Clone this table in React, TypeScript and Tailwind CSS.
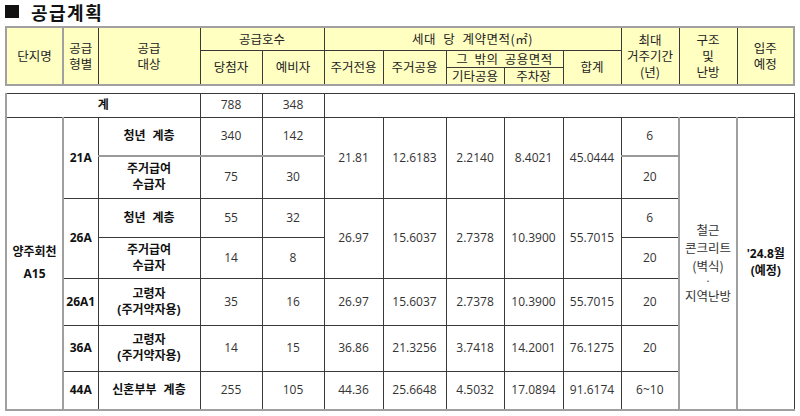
const font = "font-['Open_Sans','Noto_Sans_CJK_KR',sans-serif]"

const h = "border border-[#3a3a3a] text-center align-middle p-0 font-normal leading-[16px]"
const c = "border border-[#3a3a3a] text-center align-middle p-0 leading-[16px]"
const b = c + " font-bold text-[#111]"
const split = " border-b-2 border-b-[#9a9a9a]"
const ws = " [word-spacing:4px]"

function Cols() {
  const w = [57, 35, 102, 62, 62, 59, 63, 58, 59, 58, 58, 58, 57]
  return (
    <colgroup>
      {w.map((x, i) => (
        <col key={i} style={{ width: x }} />
      ))}
    </colgroup>
  )
}

export default function App() {
  return (
    <div className={`w-[800px] h-[416px] bg-white text-[#333] ${font}`}>
      {/* Title */}
      <div className="h-[26px] pl-[5px] flex items-start gap-[12px] text-[#111]">
        <span className="mt-[5px] w-[14px] h-[13px] bg-[#111]" />
        <span className="text-[18px] font-bold leading-[24px] tracking-[1.5px] font-['Noto_Sans_CJK_KR',sans-serif]">공급계획</span>
      </div>

      {/* Header table */}
      <table className="ml-[5px] w-[788px] table-fixed border-collapse bg-[#ffffc2] text-[12.5px] text-[#222] border-2 border-[#a0a0a0] font-['Noto_Sans_CJK_KR',sans-serif]">
        <Cols />
        <thead>
          <tr className="h-[23px]">
            <th rowSpan={3} className={h + " border-r-2 border-r-[#a0a0a0]"}>단지명</th>
            <th rowSpan={3} className={h}>공급<br />형별</th>
            <th rowSpan={3} className={h}>공급<br />대상</th>
            <th colSpan={2} className={h}>공급호수</th>
            <th colSpan={5} className={h + " tracking-[0.5px]" + ws}>세대 당 계약면적(㎡)</th>
            <th rowSpan={3} className={h}>최대<br />거주기간<br />(년)</th>
            <th rowSpan={3} className={h}>구조<br />및<br />난방</th>
            <th rowSpan={3} className={h}>입주<br />예정</th>
          </tr>
          <tr className="h-[17px]">
            <th rowSpan={2} className={h}>당첨자</th>
            <th rowSpan={2} className={h}>예비자</th>
            <th rowSpan={2} className={h}>주거전용</th>
            <th rowSpan={2} className={h}>주거공용</th>
            <th colSpan={2} className={h + " tracking-[0.5px] [word-spacing:3px]"}>그 밖의 공용면적</th>
            <th rowSpan={2} className={h}>합계</th>
          </tr>
          <tr className="h-[14px]">
            <th className={h}>기타공용</th>
            <th className={h}>주차장</th>
          </tr>
        </thead>
      </table>

      {/* Body table */}
      <table className="mt-[7px] ml-[5px] w-[788px] table-fixed border-collapse text-[12px] border-l-2 border-b-2 border-[#a0a0a0]">
        <Cols />
        <tbody>
          <tr className="h-[24px]">
            <td colSpan={3} className={b}>계</td>
            <td className={c}>788</td>
            <td className={c}>348</td>
            <td colSpan={8} className={c}></td>
          </tr>

          <tr className="h-[39px]">
            <td rowSpan={7} className={b + " border-l-2 border-l-[#a0a0a0] border-r-2 border-r-[#a0a0a0] leading-[22px]"}>양주회천<br />A15</td>
            <td rowSpan={2} className={b}>21A</td>
            <td className={b + split + ws}>청년 계층</td>
            <td className={c + split}>340</td>
            <td className={c + split}>142</td>
            <td rowSpan={2} className={c}>21.81</td>
            <td rowSpan={2} className={c}>12.6183</td>
            <td rowSpan={2} className={c}>2.2140</td>
            <td rowSpan={2} className={c}>8.4021</td>
            <td rowSpan={2} className={c}>45.0444</td>
            <td className={c + split}>6</td>
            <td rowSpan={7} className={c + " border-x-2 border-x-[#a0a0a0] text-[12.5px] leading-[18px] font-['Noto_Sans_CJK_KR',sans-serif]"}>
              철근<br />콘크리트<br />(벽식)<br /><span className="text-[10px] leading-[12px] block">·</span>지역난방
            </td>
            <td rowSpan={7} className={b + " leading-[17px] pb-[2px]"}>'24.8월<br />(예정)</td>
          </tr>
          <tr className="h-[42px]">
            <td className={b}>주거급여<br />수급자</td>
            <td className={c}>75</td>
            <td className={c}>30</td>
            <td className={c}>20</td>
          </tr>

          <tr className="h-[39px]">
            <td rowSpan={2} className={b}>26A</td>
            <td className={b + ws}>청년 계층</td>
            <td className={c}>55</td>
            <td className={c}>32</td>
            <td rowSpan={2} className={c}>26.97</td>
            <td rowSpan={2} className={c}>15.6037</td>
            <td rowSpan={2} className={c}>2.7378</td>
            <td rowSpan={2} className={c}>10.3900</td>
            <td rowSpan={2} className={c}>55.7015</td>
            <td className={c}>6</td>
          </tr>
          <tr className="h-[41px]">
            <td className={b}>주거급여<br />수급자</td>
            <td className={c}>14</td>
            <td className={c}>8</td>
            <td className={c}>20</td>
          </tr>

          <tr className="h-[47px]">
            <td className={b}>26A1</td>
            <td className={b}>고령자<br />(주거약자용)</td>
            <td className={c}>35</td>
            <td className={c}>16</td>
            <td className={c}>26.97</td>
            <td className={c}>15.6037</td>
            <td className={c}>2.7378</td>
            <td className={c}>10.3900</td>
            <td className={c}>55.7015</td>
            <td className={c}>20</td>
          </tr>

          <tr className="h-[46px]">
            <td className={b}>36A</td>
            <td className={b}>고령자<br />(주거약자용)</td>
            <td className={c}>14</td>
            <td className={c}>15</td>
            <td className={c}>36.86</td>
            <td className={c}>21.3256</td>
            <td className={c}>3.7418</td>
            <td className={c}>14.2001</td>
            <td className={c}>76.1275</td>
            <td className={c}>20</td>
          </tr>

          <tr className="h-[39px]">
            <td className={b}>44A</td>
            <td className={b + ws}>신혼부부 계층</td>
            <td className={c}>255</td>
            <td className={c}>105</td>
            <td className={c}>44.36</td>
            <td className={c}>25.6648</td>
            <td className={c}>4.5032</td>
            <td className={c}>17.0894</td>
            <td className={c}>91.6174</td>
            <td className={c}>6~10</td>
          </tr>
        </tbody>
      </table>
    </div>
  )
}
